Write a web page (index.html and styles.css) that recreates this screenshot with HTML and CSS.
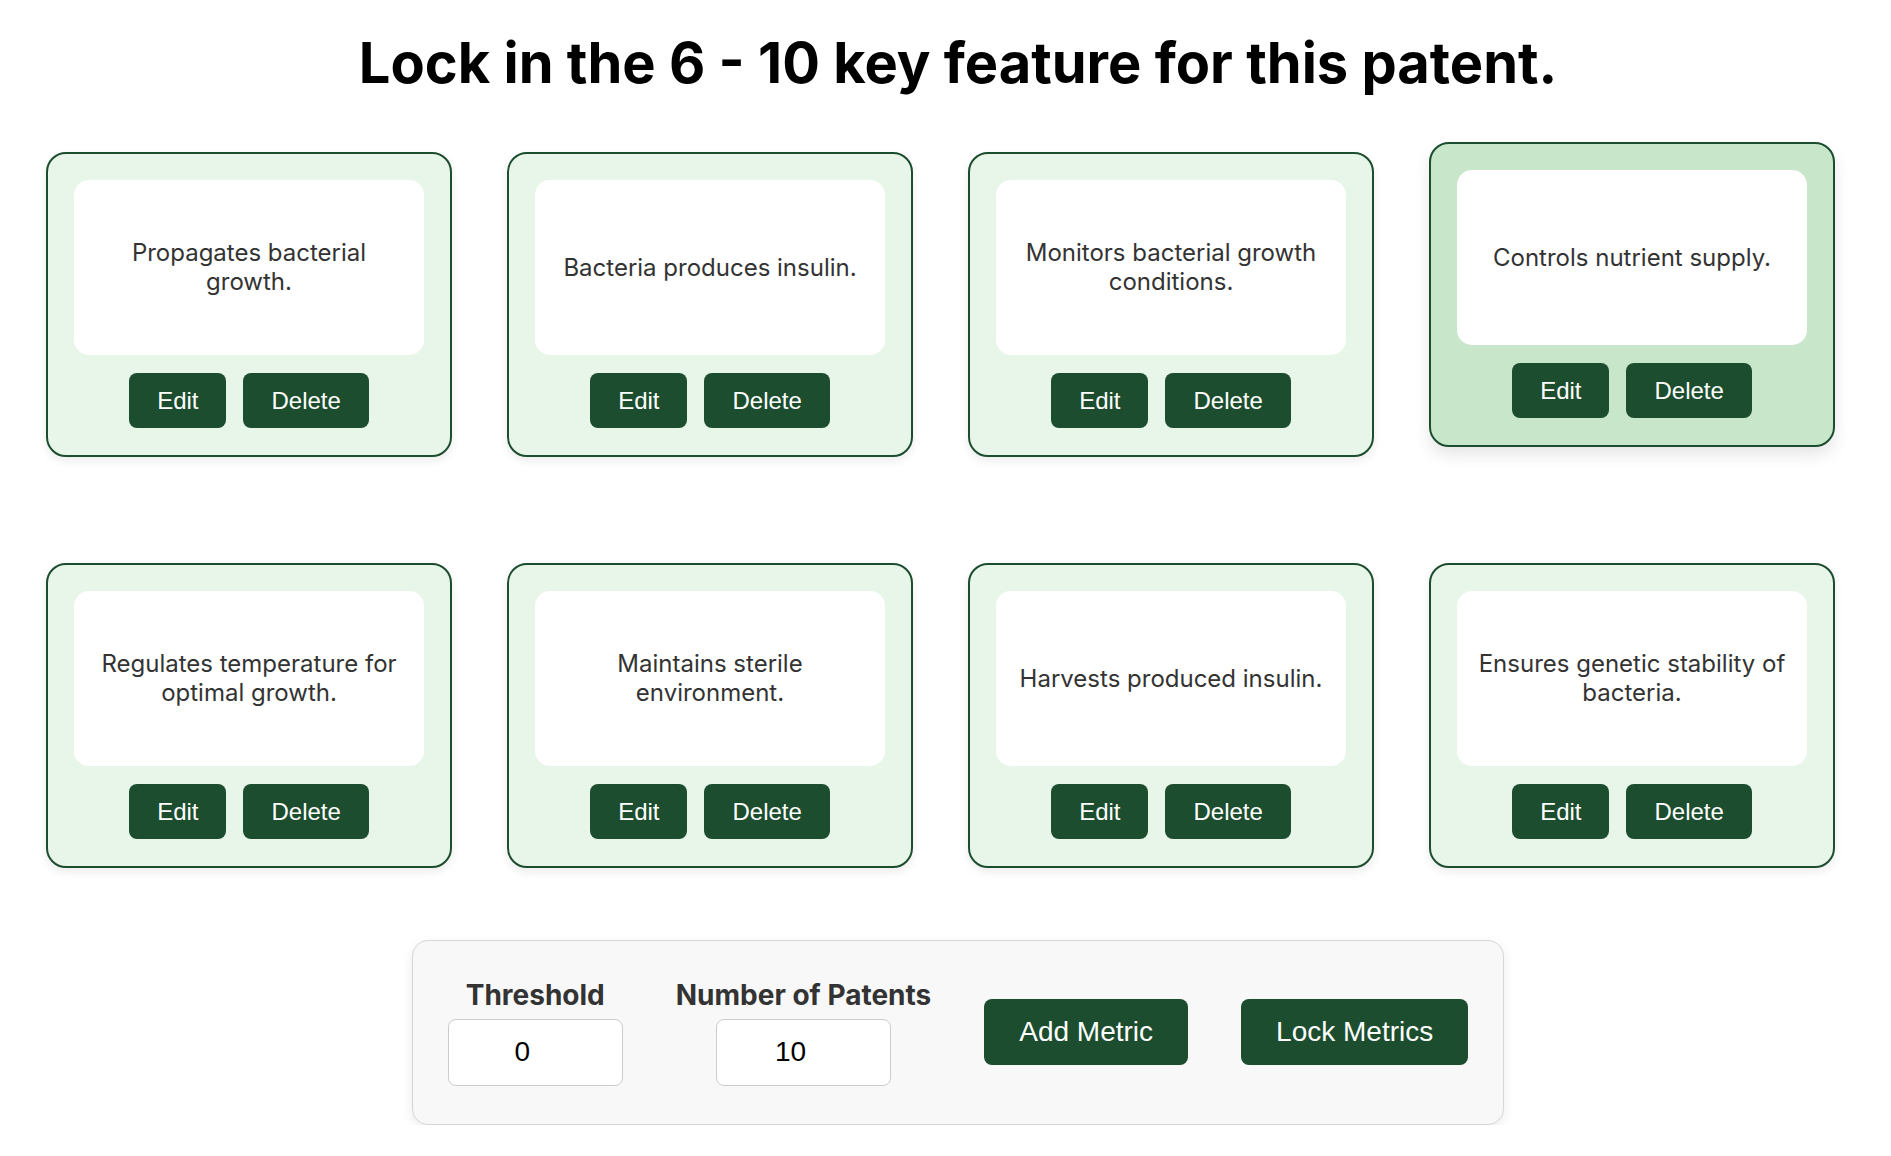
FILE: index.html
```html
<!DOCTYPE html>
<html lang="en">
<head>
<meta charset="utf-8">
<title>Lock in key features</title>
<link rel="stylesheet" href="styles.css">
</head>
<body>
<main class="page">
  <h1 class="title">Lock in the 6 - 10 key feature for this patent.</h1>
  <section class="grid">
    <div class="card">
      <div class="card-text">Propagates bacterial growth.</div>
      <div class="card-actions"><button class="btn">Edit</button><button class="btn">Delete</button></div>
    </div>
    <div class="card">
      <div class="card-text">Bacteria produces insulin.</div>
      <div class="card-actions"><button class="btn">Edit</button><button class="btn">Delete</button></div>
    </div>
    <div class="card">
      <div class="card-text">Monitors bacterial growth conditions.</div>
      <div class="card-actions"><button class="btn">Edit</button><button class="btn">Delete</button></div>
    </div>
    <div class="card card-active">
      <div class="card-text">Controls nutrient supply.</div>
      <div class="card-actions"><button class="btn">Edit</button><button class="btn">Delete</button></div>
    </div>
    <div class="card">
      <div class="card-text">Regulates temperature for optimal growth.</div>
      <div class="card-actions"><button class="btn">Edit</button><button class="btn">Delete</button></div>
    </div>
    <div class="card">
      <div class="card-text">Maintains sterile environment.</div>
      <div class="card-actions"><button class="btn">Edit</button><button class="btn">Delete</button></div>
    </div>
    <div class="card">
      <div class="card-text">Harvests produced insulin.</div>
      <div class="card-actions"><button class="btn">Edit</button><button class="btn">Delete</button></div>
    </div>
    <div class="card">
      <div class="card-text">Ensures genetic stability of bacteria.</div>
      <div class="card-actions"><button class="btn">Edit</button><button class="btn">Delete</button></div>
    </div>
  </section>
  <section class="panel">
    <div class="field">
      <label class="field-label" for="threshold">Threshold</label>
      <input class="field-input" id="threshold" type="text" value="0">
    </div>
    <div class="field">
      <label class="field-label" for="patents">Number of Patents</label>
      <input class="field-input" id="patents" type="text" value="10">
    </div>
    <button class="btn btn-lg">Add Metric</button>
    <button class="btn btn-lg">Lock Metrics</button>
  </section>
</main>
</body>
</html>
```
FILE: styles.css
```css
* { box-sizing: border-box; }

html, body {
  margin: 0;
  padding: 0;
  background: #ffffff;
}

body {
  font-family: Inter, "Noto Sans", sans-serif;
  color: #333333;
}

.page {
  padding: 30px 0 0 25px;
}

.title {
  margin: 0 0 54px;
  text-align: center;
  font-family: Inter, sans-serif;
  font-weight: 700;
  font-size: 56px;
  line-height: 1.21;
  color: #000000;
}

.grid {
  margin-left: 21px;
  display: grid;
  grid-template-columns: repeat(4, 406px);
  column-gap: 55px;
  row-gap: 106px;
}

.card {
  height: 305px;
  background: #e8f5e9;
  border: 2px solid #1c4d2e;
  border-radius: 20px;
  padding: 26px;
  box-shadow: 0 4px 10px rgba(0, 0, 0, 0.08);
  display: flex;
  flex-direction: column;
}

.card-active {
  background: #c8e6c9;
  transform: translateY(-10px);
  box-shadow: 0 8px 16px rgba(0, 0, 0, 0.1);
}

.card-text {
  height: 175px;
  background: #ffffff;
  border-radius: 15px;
  padding: 0 15px;
  display: flex;
  align-items: center;
  justify-content: center;
  text-align: center;
  font-family: Inter, sans-serif;
  font-size: 24px;
  color: #333333;
}

.card-actions {
  margin-top: 18px;
  display: flex;
  justify-content: center;
  gap: 17px;
}

.btn {
  font-family: "Liberation Sans", Arial, sans-serif;
  font-size: 24px;
  line-height: 1.15;
  color: #ffffff;
  background: #1c4d2e;
  border: none;
  border-radius: 8px;
  padding: 14px 28px;
  cursor: pointer;
}

.panel {
  width: fit-content;
  margin: 72px auto 0;
  background: #f8f8f8;
  border: 1px solid #d6d6d6;
  border-radius: 16px;
  padding: 38px 35px;
  box-shadow: 0 4px 12px rgba(0, 0, 0, 0.08);
  display: flex;
  align-items: center;
  gap: 53px;
}

.field {
  display: flex;
  flex-direction: column;
  align-items: center;
}

.field-label {
  font-family: Inter, sans-serif;
  font-weight: 700;
  font-size: 28px;
  line-height: 1.21;
  color: #333333;
  margin-bottom: 6px;
}

.field-input {
  width: 175px;
  height: 67px;
  border: 1px solid #cccccc;
  border-radius: 8px;
  background: #ffffff;
  text-align: center;
  font-family: "Liberation Sans", Arial, sans-serif;
  font-size: 28px;
  color: #000000;
  padding: 0 26px 0 0;
}

.btn-lg {
  font-size: 28px;
  padding: 17px 35px;
}
```
